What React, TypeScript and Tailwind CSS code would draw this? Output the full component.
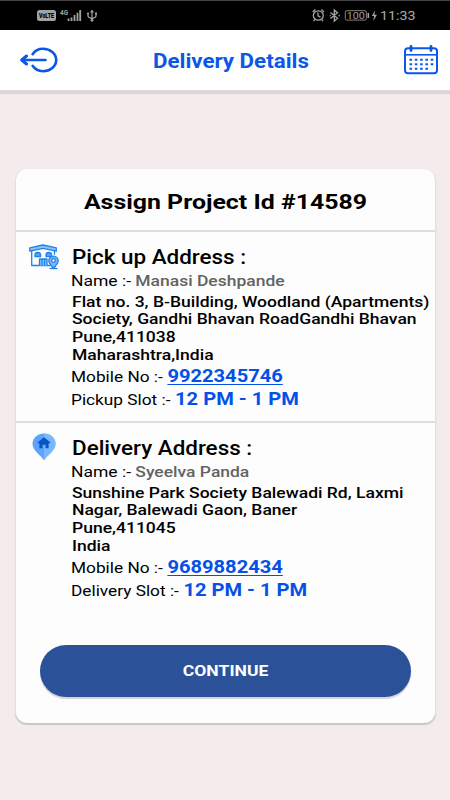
import type { ReactNode } from 'react';

type Stop = {
  kind: 'pickup' | 'delivery';
  title: string;
  name: string;
  address: string[];
  mobile: string;
  slotLabel: string;
  slot: string;
};

const stops: Stop[] = [
  {
    kind: 'pickup',
    title: 'Pick up Address :',
    name: 'Manasi Deshpande',
    address: [
      'Flat no. 3, B-Building, Woodland (Apartments)',
      'Society, Gandhi Bhavan RoadGandhi Bhavan',
      'Pune,411038',
      'Maharashtra,India',
    ],
    mobile: '9922345746',
    slotLabel: 'Pickup Slot :-',
    slot: '12 PM - 1 PM',
  },
  {
    kind: 'delivery',
    title: 'Delivery Address :',
    name: 'Syeelva Panda',
    address: ['Sunshine Park Society Balewadi Rd, Laxmi', 'Nagar, Balewadi Gaon, Baner', 'Pune,411045', 'India'],
    mobile: '9689882434',
    slotLabel: 'Delivery Slot :-',
    slot: '12 PM - 1 PM',
  },
];

// wide text, scaled from the left edge
function Wide({ children, className = 'scale-x-[1.16]' }: { children: ReactNode; className?: string }) {
  return <div className={`w-max origin-left whitespace-nowrap ${className}`}>{children}</div>;
}

function StatusBar() {
  return (
    <div className="flex h-[30px] items-center justify-between border-t border-[#444] bg-black pl-[37px] pr-[34px] text-[#a3a3a3]">
      <svg width="62" height="16" viewBox="0 0 62 16" fill="none">
        <rect x="0" y="2" width="19" height="11" rx="2.5" fill="#a3a3a3" />
        <text x="2" y="10.3" fontSize="7" fontWeight="900" fill="#000" textLength="15" lengthAdjust="spacingAndGlyphs" fontFamily="Roboto, sans-serif">VoLTE</text>
        <text x="23" y="6.5" fontSize="7" fontWeight="700" fill="#a3a3a3" textLength="8" lengthAdjust="spacingAndGlyphs" fontFamily="Roboto, sans-serif">4G</text>
        <path d="M31.500 10.500v2.500M34.500 9.500v3.500M37.500 7v6M40.500 4.800v8.200M43.200 2v11" stroke="#a3a3a3" strokeWidth="1.800" />
        <path d="M55 3v9M51 5.500v2.500q0 1.500 4 2.600q4-1.100 4-2.600V5.500" stroke="#a3a3a3" strokeWidth="1.200" />
        <path d="M55 1.500l-2 3h4z" fill="#a3a3a3" />
        <circle cx="55" cy="12.300" r="1.400" fill="#a3a3a3" />
        <circle cx="51" cy="5.500" r="1.100" fill="#a3a3a3" />
        <path d="M58 4.400h2v2h-2z" fill="#a3a3a3" />
      </svg>
      <div className="flex items-center">
        <svg width="68" height="16" viewBox="0 0 68 16" fill="none" stroke="#a3a3a3" strokeWidth="1.3">
          <ellipse cx="6.300" cy="7.500" rx="5" ry="4.700" />
          <path d="M6 4.500v3.300l2.500 1.300M.7 4L3.300 1.500M12 4L9.400 1.500M2.800 11.500l-1.200 1.600M9.800 11.500l1.200 1.600" />
          <path d="M18.500 4.500l7 5.700-3.200 2.800V2l3.200 2.800-7 5.700M17.800 7.500h.9M26.500 7.500h1.300" />
          <rect x="33.300" y="2.700" width="21" height="9.400" rx="1.500" strokeWidth=".8" />
          <path d="M56.300 5v5" strokeWidth="1.600" />
          <path d="M63.200 2.300L59.800 8.100h2.300l-.8 4.800 3.600-6.100h-2.500z" fill="#a3a3a3" stroke="none" />
          <text x="34.800" y="10.700" fontSize="9.200" fill="#a3a3a3" stroke="none" textLength="18" lengthAdjust="spacingAndGlyphs" fontFamily="Roboto, sans-serif">100</text>
        </svg>
        <svg width="36" height="16" viewBox="0 0 36 16">
          <text x="0" y="12" fontSize="13.5" fill="#a8a8a8" textLength="35.500" lengthAdjust="spacingAndGlyphs" fontFamily="Roboto, sans-serif">11:33</text>
        </svg>
      </div>
    </div>
  );
}

function BackIcon() {
  return (
    <svg width="38" height="26" viewBox="0 0 38 26" fill="none" stroke="#0b57e8" strokeWidth="2.6" strokeLinecap="round">
      <path d="M12.600 7.200C14.800 3.900 18.700 1.800 23 1.800C30.300 1.800 36.200 6.800 36.200 13S30.300 24.200 23 24.200C18.700 24.200 14.800 22.100 12.600 18.800" />
      <path d="M25.500 13H3" />
      <path d="M6.500 9L1.700 13L6.500 17" strokeWidth="3" strokeLinejoin="round" />
    </svg>
  );
}

function CalendarIcon() {
  return (
    <svg width="34" height="30" viewBox="0 0 34 30" fill="none" stroke="#0b57e8">
      <rect x="1" y="3.300" width="32" height="25" rx="3" strokeWidth="2" />
      <path d="M1 9.800h32" strokeWidth="1.600" />
      <path d="M7 1.500v4M27 1.500v4" strokeWidth="2.800" strokeLinecap="round" />
      <path d="M5.500 14.700h24M5.500 19.200h24" strokeWidth="2" strokeDasharray="2.600 2.700" />
      <path d="M5.500 23.800h18.500" strokeWidth="2" strokeDasharray="2.600 2.700" />
    </svg>
  );
}

function HouseIcon() {
  return (
    <svg width="30" height="26" viewBox="0 0 30 26" fill="none" stroke="#2183e8" strokeWidth="1.3" strokeLinejoin="round">
      <path d="M2.700 6.200V21.500h18.500M25.500 6.200v4.500" />
      <path d="M.8 3.800L14 1l13.300 2.800v3.400L14 4.300.8 7.200z" fill="#8cc4ff" />
      <path d="M6 12.500V11.200a2.800 2.700 0 0 1 5.600 0v1.300zM17 12.500V11.200a2.800 2.700 0 0 1 5.600 0v1.300z" fill="#5ba7f7" />
      <path d="M10.500 21.500v-6.500h7.500V21.500M13 15v6.500M15.600 15v6.500" fill="#8cc4ff" />
      <path d="M24.500 24.500c-1.500-2.200-4.700-4.800-4.700-7.700a4.700 4.600 0 0 1 9.400 0c0 2.900-3.200 5.500-4.700 7.700z" fill="#7ab8fa" />
      <circle cx="24.500" cy="16.500" r="1.800" fill="#fff" />
      <path d="M20.500 24.500h8" />
    </svg>
  );
}

function PinIcon() {
  return (
    <svg width="24" height="28" viewBox="0 0 24 28">
      <path d="M12 27.300C9 22.300.5 17.500.5 11A11.500 10.500 0 0 1 23.500 11C23.500 17.500 15 22.300 12 27.300z" fill="#5ca3fb" />
      <path d="M12 .5A11.500 10.500 0 0 1 23.500 11C23.500 17.500 15 22.300 12 27.300z" fill="#7ab7fd" />
      <path d="M12 4.300L5.500 9.600l.8 1L7.400 10v5.300h3.100v-3.600h3v3.600h3.100V10l1.100.6.8-1z" fill="#0754c5" />
    </svg>
  );
}

function StopSection({ stop }: { stop: Stop }) {
  const pickup = stop.kind === 'pickup';
  return (
    <section className="flex h-[191px] border-t-2 border-[#dedede] pt-[13px]">
      <div className={pickup ? 'w-[55px] pl-[13px] -mt-px' : 'w-[55px] pl-[15.500px] -mt-[3px]'}>
        {pickup ? <HouseIcon /> : <PinIcon />}
      </div>
      <div className="w-0 flex-1 text-[15px] text-black">
        <Wide className="ml-[0.5px] scale-x-[1.15] text-[19.5px] font-medium leading-[25px]">{stop.title}</Wide>
        <Wide className="h-[23.5px] scale-x-[1.165] leading-[22px]">
          Name :- <span className="font-medium text-[#636363]">{stop.name}</span>
        </Wide>
        {stop.address.map((line) => (
          <Wide key={line} className="ml-[0.5px] scale-x-[1.168] font-medium leading-[17.7px]">{line}</Wide>
        ))}
        <Wide className="mt-[0.5px] flex h-[23px] scale-x-[1.15] items-baseline gap-1 leading-[23px]">
          <span>Mobile No :-</span>
          <a className="text-[17.5px] font-bold text-[#0551e8] underline decoration-1 underline-offset-2">{stop.mobile}</a>
        </Wide>
        <Wide className="flex h-[23px] scale-x-[1.15] items-baseline gap-1 leading-[23px]">
          <span>{stop.slotLabel}</span>
          <span className="text-[17.5px] font-bold text-[#0551e8]">{stop.slot}</span>
        </Wide>
      </div>
    </section>
  );
}

export default function App() {
  return (
    <div className="flex h-[800px] w-[450px] flex-col overflow-hidden bg-[#f4ebec] font-[Roboto,sans-serif]">
      <StatusBar />
      <header className="flex h-[60px] items-center justify-between bg-white pl-[20px] pr-[12px] shadow-[0_4px_1px_#ddd6d7]">
        <BackIcon />
        <h1 className="scale-x-[1.115] pt-px text-[20px] font-bold text-[#0b57e8]">Delivery Details</h1>
        <CalendarIcon />
      </header>
      <main className="mx-[15px] mt-[79px] h-[554px] w-[421px] rounded-xl border-x border-[#e5dfe0] bg-[#fdfdfd] shadow-[0_2px_1px_#cbc5c6]">
        <div className="flex h-[61px] items-center justify-center pt-[6px]">
          <h2 className="scale-x-[1.185] whitespace-nowrap text-[21px] font-bold text-black">Assign Project Id #14589</h2>
        </div>
        {stops.map((stop) => (
          <StopSection key={stop.kind} stop={stop} />
        ))}
        <div className="px-[24px] pt-[33px]">
          <button className="h-[52px] w-full rounded-full bg-[#2b5299] text-[15px] font-bold text-white shadow-[0_2px_1px_#d3d3d9]">
            <span className="inline-block scale-x-[1.17] pt-px">CONTINUE</span>
          </button>
        </div>
      </main>
    </div>
  );
}
